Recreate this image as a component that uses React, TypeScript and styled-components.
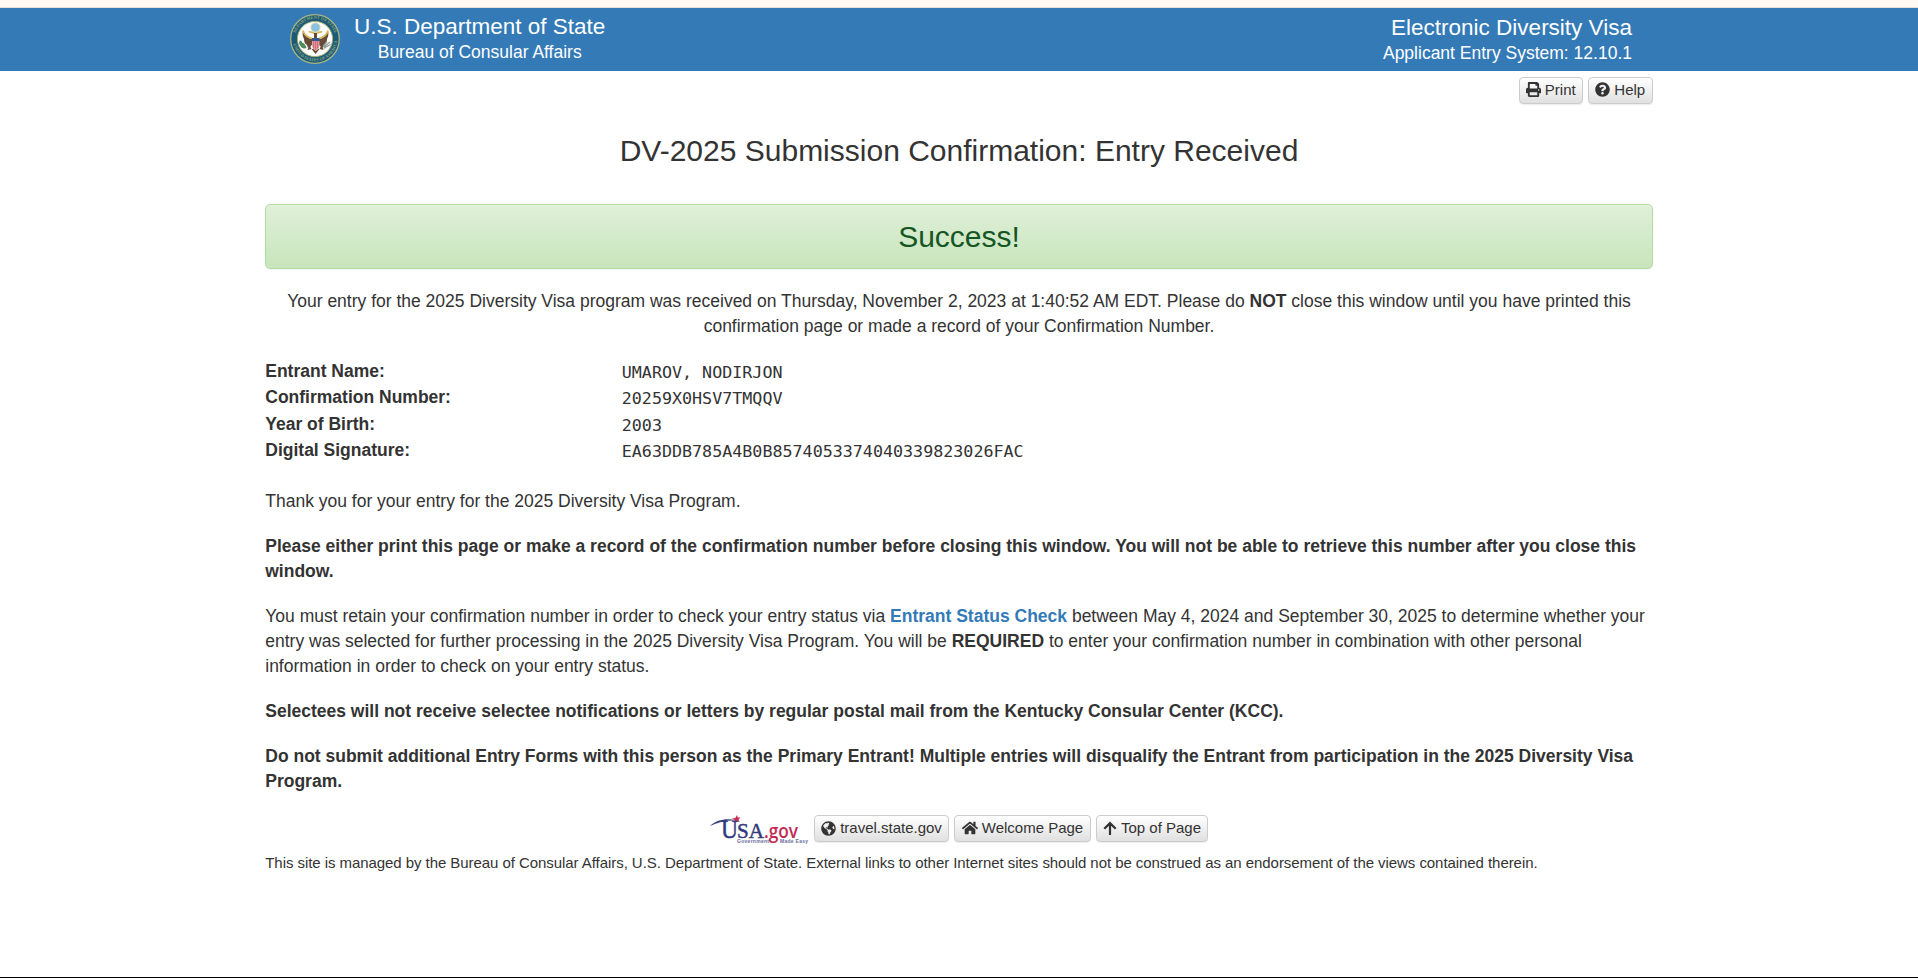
import React from "react";
import styled, { createGlobalStyle } from "styled-components";
import { FaPrint, FaQuestionCircle, FaGlobeAmericas, FaHome } from "react-icons/fa";

const GlobalStyle = createGlobalStyle`
  * { box-sizing: border-box; }
  body {
    margin: 0;
    background: #fff;
    color: #333;
    font-family: "Liberation Sans", Arial, sans-serif;
    font-size: 17.5px;
    line-height: 25px;
  }
`;

const Page = styled.div`
  height: 978px;
  overflow: hidden;
  border-bottom: 1px solid #000;
`;

const TopStrip = styled.div`
  height: 8px;
  background: #fff8f3;
  border-bottom: 1px solid #e5e0dc;
`;

const Banner = styled.header`
  height: 63px;
  background: #337ab7;
  color: #fff;
`;

const BannerInner = styled.div`
  width: 1388px;
  height: 100%;
  margin: 0 auto;
  padding: 0 21px 0 25px;
  display: flex;
  justify-content: space-between;
`;

const Brand = styled.div`
  display: flex;
  gap: 14px;
  padding-top: 6px;
`;

const BannerText = styled.div<{ $align: string; $top: number }>`
  padding-top: ${(p) => p.$top}px;
  text-align: ${(p) => p.$align};
`;

const BannerTitle = styled.div`
  font-size: 22.5px;
  line-height: 24px;
  white-space: nowrap;
`;

const BannerSub = styled.div`
  padding-top: 1px;
  font-size: 17.5px;
  line-height: 25px;
  white-space: nowrap;
`;

const Container = styled.main`
  width: 1387.5px;
  margin: 0 auto;
`;

const Toolbar = styled.div`
  display: flex;
  justify-content: flex-end;
  gap: 5px;
  padding-top: 6px;
`;

const Button = styled.a<{ $w: number; $lift?: number }>`
  display: flex;
  align-items: center;
  justify-content: center;
  gap: 4px;
  width: ${(p) => p.$w}px;
  height: 27px;
  padding-bottom: ${(p) => p.$lift ?? 0}px;
  border: 1px solid #ccc;
  border-radius: 4px;
  background: linear-gradient(#fff, #e0e0e0);
  box-shadow: inset 0 1px 0 rgba(255, 255, 255, 0.15), 0 1px 1px rgba(0, 0, 0, 0.075);
  font-size: 15px;
  line-height: 22px;
  white-space: nowrap;
  svg { flex: none; }
`;

const Title = styled.h1`
  margin: 30px 0 0;
  font-size: 30px;
  line-height: 33px;
  font-weight: 400;
  text-align: center;
`;

const Alert = styled.div`
  height: 65px;
  margin-top: 37px;
  border: 1px solid #b2dba1;
  border-radius: 5px;
  background: linear-gradient(#dff0d8, #c8e5bc);
  box-shadow: inset 0 1px 0 rgba(255, 255, 255, 0.25), 0 1px 2px rgba(0, 0, 0, 0.05);
  color: #155724;
  font-size: 30px;
  line-height: 63px;
  text-align: center;
`;

const Lead = styled.p`
  margin: 20px 0 0;
  text-align: center;
`;

const Details = styled.dl`
  display: grid;
  grid-template-columns: 356.5px 1fr;
  grid-auto-rows: 26.4px;
  margin: 20px 0 24px;
`;

const Term = styled.dt`
  font-weight: 700;
`;

const Value = styled.dd`
  margin: 0;
  padding-top: 1px;
  font-family: "DejaVu Sans Mono", monospace;
  font-size: 16.7px;
`;

const Text = styled.p<{ $bold?: boolean }>`
  margin: 20px 0 0;
  font-weight: ${(p) => (p.$bold ? 700 : 400)};
`;

const Link = styled.a`
  color: #337ab7;
  font-weight: 700;
`;

const FooterRow = styled.div`
  display: flex;
  justify-content: center;
  gap: 5px;
  height: 30px;
  margin-top: 21px;
`;

const Managed = styled.p`
  margin: 7px 0 0;
  font-size: 15px;
  line-height: 22px;
  letter-spacing: -0.059px;
`;

const Seal = () => (
  <svg width="50" height="50" viewBox="0 0 50 50">
    <defs>
      <path id="sealTop" d="M4.8 25a20.2 20.2 0 0 1 40.4 0" />
      <path id="sealBottom" d="M2.8 25a22.2 22.2 0 0 0 44.4 0" />
    </defs>
    <circle cx="25" cy="25" r="24.3" fill="#1b5b78" stroke="#a9b581" strokeWidth="1.3" />
    <circle cx="25" cy="25" r="17.6" fill="#fdfdfb" stroke="#a9b071" strokeWidth="1" />
    <g fill="#8fa37c" fontSize="4.3" fontFamily="Liberation Serif, serif" fontWeight="700">
      <text><textPath href="#sealTop" startOffset="6">DEPARTMENT OF STATE</textPath></text>
      <text><textPath href="#sealBottom" startOffset="5">UNITED STATES OF AMERICA</textPath></text>
    </g>
    <circle cx="25.500" cy="13.500" r="4.600" fill="#8cc2df" stroke="#d0d9ad" />
    <path d="M22 25c-3 0-7-3-9-8-1 3 0 6 1 8 0 3 1 5 3 6l1 3 3-2 2-3zM29 25c3 0 7-3 9-8 1 3 0 6-1 8 0 3-1 5-3 6l-1 3-3-2-2-3z" fill="#684a38" />
    <path d="M13 16.500c1 4 5 7 9 8M38 16.500c-1 4-5 7-9 8M19 18c2-1 4 1.500 6.500 1.500s4.500-2.500 6.500-1.500" fill="none" stroke="#d8b45a" strokeWidth="1.700" />
    <path d="M24 19h3v5h-3zM21.500 35l4 5 4-5zM19.500 31l-2 5 4-1zM31.500 31l2 5-4-1z" fill="#684a38" />
    <path d="M22 24h7.500v3H22z" fill="#31588f" />
    <path d="M22 27h7.500v5q-1 4-3.700 5-2.800-1-3.800-5z" fill="#e0a1a6" />
    <path d="M23.700 27v7.500M25.700 27v8.500M27.700 27v7.500" stroke="#c85362" strokeWidth=".8" />
    <path d="M9.500 27c1-1 2 0 3 2 2 0 3 2 4 5-3 1-5 0-6-2-1-1-2-3-1-5z" fill="#4b8b64" />
    <path d="M40 28l-6 5M40.500 30.500l-7 4M37 27.500l-4 5" stroke="#8e9c99" strokeWidth="1.300" />
  </svg>
);

const UsaLogo = () => (
  <svg width="99" height="30" viewBox="0 0 99 30">
    <path d="M0 11C7 4.500 17 3 27 5.500 17 5 8 7 0 11z" fill="#39427f" />
    <path d="M27 0l.7 2.600 2.800-.2-2 2 1.200 2.800-2.800-1.300-2.500 2 .4-3-2.800-1.300 3.300-.5z" fill="#c92a4f" />
    <g fontFamily="Liberation Serif, serif" fill="#343a80" stroke="#343a80" strokeWidth=".5">
      <text x="11" y="23" fontSize="25" textLength="17" lengthAdjust="spacingAndGlyphs">U</text>
      <text x="27" y="23" fontSize="21" textLength="27" lengthAdjust="spacingAndGlyphs">SA</text>
    </g>
    <text x="54" y="23" fontSize="20" fontFamily="Open Sans, sans-serif" fontWeight="600" fill="#c42952" textLength="34" lengthAdjust="spacingAndGlyphs">.gov</text>
    <g fontFamily="Liberation Sans, sans-serif" fontSize="5" fontWeight="700" fill="#6a6d9d">
      <text x="27" y="28" textLength="32">Government</text>
      <text x="70" y="28" textLength="28">Made Easy</text>
    </g>
  </svg>
);

const ArrowUp = () => (
  <svg width="14" height="15" viewBox="0 0 14 15" fill="none" stroke="currentColor" strokeWidth="2.200">
    <path d="M7 14V2M1.300 7.800L7 2.100l5.700 5.700" />
  </svg>
);

const details = [
  ["Entrant Name:", "UMAROV, NODIRJON"],
  ["Confirmation Number:", "20259X0HSV7TMQQV"],
  ["Year of Birth:", "2003"],
  ["Digital Signature:", "EA63DDB785A4B0B8574053374040339823026FAC"],
];

export default function App() {
  return (
    <Page>
      <GlobalStyle />
      <TopStrip />
      <Banner>
        <BannerInner>
          <Brand>
            <Seal />
            <BannerText $align="center" $top={1}>
              <BannerTitle>U.S. Department of State</BannerTitle>
              <BannerSub>Bureau of Consular Affairs</BannerSub>
            </BannerText>
          </Brand>
          <BannerText $align="right" $top={8}>
            <BannerTitle>Electronic Diversity Visa</BannerTitle>
            <BannerSub>Applicant Entry System: 12.10.1</BannerSub>
          </BannerText>
        </BannerInner>
      </Banner>
      <Container>
        <Toolbar>
          <Button $w={64} $lift={2}><FaPrint size={15} />Print</Button>
          <Button $w={65} $lift={2}><FaQuestionCircle size={15} />Help</Button>
        </Toolbar>
        <Title>DV-2025 Submission Confirmation: Entry Received</Title>
        <Alert>Success!</Alert>
        <Lead>
          Your entry for the 2025 Diversity Visa program was received on Thursday, November 2, 2023 at 1:40:52 AM EDT. Please do <b>NOT</b> close this window until you have printed this<br />
          confirmation page or made a record of your Confirmation Number.
        </Lead>
        <Details>
          {details.map(([term, value]) => (
            <React.Fragment key={term}>
              <Term>{term}</Term>
              <Value>{value}</Value>
            </React.Fragment>
          ))}
        </Details>
        <Text>Thank you for your entry for the 2025 Diversity Visa Program.</Text>
        <Text $bold>
          Please either print this page or make a record of the confirmation number before closing this window. You will not be able to retrieve this number after you close this<br />window.
        </Text>
        <Text>
          You must retain your confirmation number in order to check your entry status via <Link>Entrant Status Check</Link> between May 4, 2024 and September 30, 2025 to determine whether your<br />
          entry was selected for further processing in the 2025 Diversity Visa Program. You will be <b>REQUIRED</b> to enter your confirmation number in combination with other personal<br />
          information in order to check on your entry status.
        </Text>
        <Text $bold>Selectees will not receive selectee notifications or letters by regular postal mail from the Kentucky Consular Center (KCC).</Text>
        <Text $bold>
          Do not submit additional Entry Forms with this person as the Primary Entrant! Multiple entries will disqualify the Entrant from participation in the 2025 Diversity Visa<br />Program.
        </Text>
        <FooterRow>
          <UsaLogo />
          <Button $w={135}><FaGlobeAmericas size={15} />travel.state.gov</Button>
          <Button $w={137}><FaHome size={16} />Welcome Page</Button>
          <Button $w={112}><ArrowUp />Top of Page</Button>
        </FooterRow>
        <Managed>
          This site is managed by the Bureau of Consular Affairs, U.S. Department of State. External links to other Internet sites should not be construed as an endorsement of the views contained therein.
        </Managed>
      </Container>
    </Page>
  );
}
